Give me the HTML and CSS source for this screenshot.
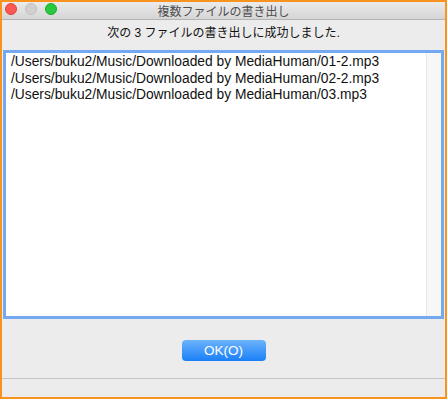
FILE: index.html
```html
<!DOCTYPE html>
<html lang="ja">
<head>
    <meta charset="UTF-8">
    <meta name="viewport" content="width=device-width, initial-scale=1.0">
    <title>複数ファイルの書き出し</title>
    <link rel="stylesheet" href="styles.css">
</head>
<body>
    <div class="window">
        <div class="titlebar">
            <div class="lights">
                <span class="light close"></span>
                <span class="light minimize"></span>
                <span class="light zoom"></span>
            </div>
            <div class="title">複数ファイルの書き出し</div>
        </div>

        <p class="message">次の 3 ファイルの書き出しに成功しました.</p>

        <div class="file-list">
            <div class="files">
                <div>/Users/buku2/Music/Downloaded by MediaHuman/01-2.mp3</div>
                <div>/Users/buku2/Music/Downloaded by MediaHuman/02-2.mp3</div>
                <div>/Users/buku2/Music/Downloaded by MediaHuman/03.mp3</div>
            </div>
            <div class="scrollbar"></div>
        </div>

        <div class="actions">
            <button class="ok-button">OK(O)</button>
        </div>
        <div class="statusbar"></div>
    </div>
</body>
</html>
```
FILE: styles.css
```css
* {
    box-sizing: border-box;
}
body {
    margin: 0;
    font-family: "Liberation Sans", "Noto Sans CJK JP", sans-serif;
    background-color: #ececec;
}
.window {
    width: 447px;
    height: 399px;
    border: 2px solid #f7931e;
    background-color: #ececec;
    display: flex;
    flex-direction: column;
}
.titlebar {
    position: relative;
    height: 18px;
    background: linear-gradient(#ebebeb, #d5d5d5);
    border-bottom: 1px solid #b4b4b4;
    display: flex;
    align-items: center;
    justify-content: center;
}
.lights {
    position: absolute;
    left: 3px;
    top: 1px;
    display: flex;
    gap: 8px;
}
.light {
    width: 12px;
    height: 12px;
    border-radius: 50%;
}
.light.close {
    background-color: #fc5753;
    border: 1px solid #e0443e;
}
.light.minimize {
    background-color: #d0d0d0;
    border: 1px solid #c0c0c0;
}
.light.zoom {
    background-color: #27c93f;
    border: 1px solid #1aab29;
}
.title {
    font-size: 12px;
    color: #4d4d4d;
    margin-top: -1px;
}
.message {
    margin: 6px 0 10px;
    font-size: 12px;
    line-height: 14px;
    text-align: center;
    color: #111;
}
.file-list {
    margin: 0 1px;
    height: 269px;
    border: 3px solid #74a9f0;
    background-color: white;
    display: flex;
}
.files {
    flex: 1;
    padding: 1px 0 0 5px;
    font-size: 13.8px;
    line-height: 16.7px;
    color: #111;
}
.scrollbar {
    width: 15px;
    background-color: #f7f7f7;
    border-left: 1px solid #e6e6e6;
}
.actions {
    height: 60px;
    display: flex;
    justify-content: center;
    align-items: flex-start;
    padding-top: 21px;
    border-bottom: 1px solid #c4c4c4;
}
.ok-button {
    width: 84px;
    height: 21px;
    border: none;
    border-radius: 4px;
    background: linear-gradient(#6cb3fa, #1a7ff7);
    color: white;
    font-family: "Liberation Sans", sans-serif;
    font-size: 13.5px;
    padding: 0;
}
.statusbar {
    flex: 1;
}
```
